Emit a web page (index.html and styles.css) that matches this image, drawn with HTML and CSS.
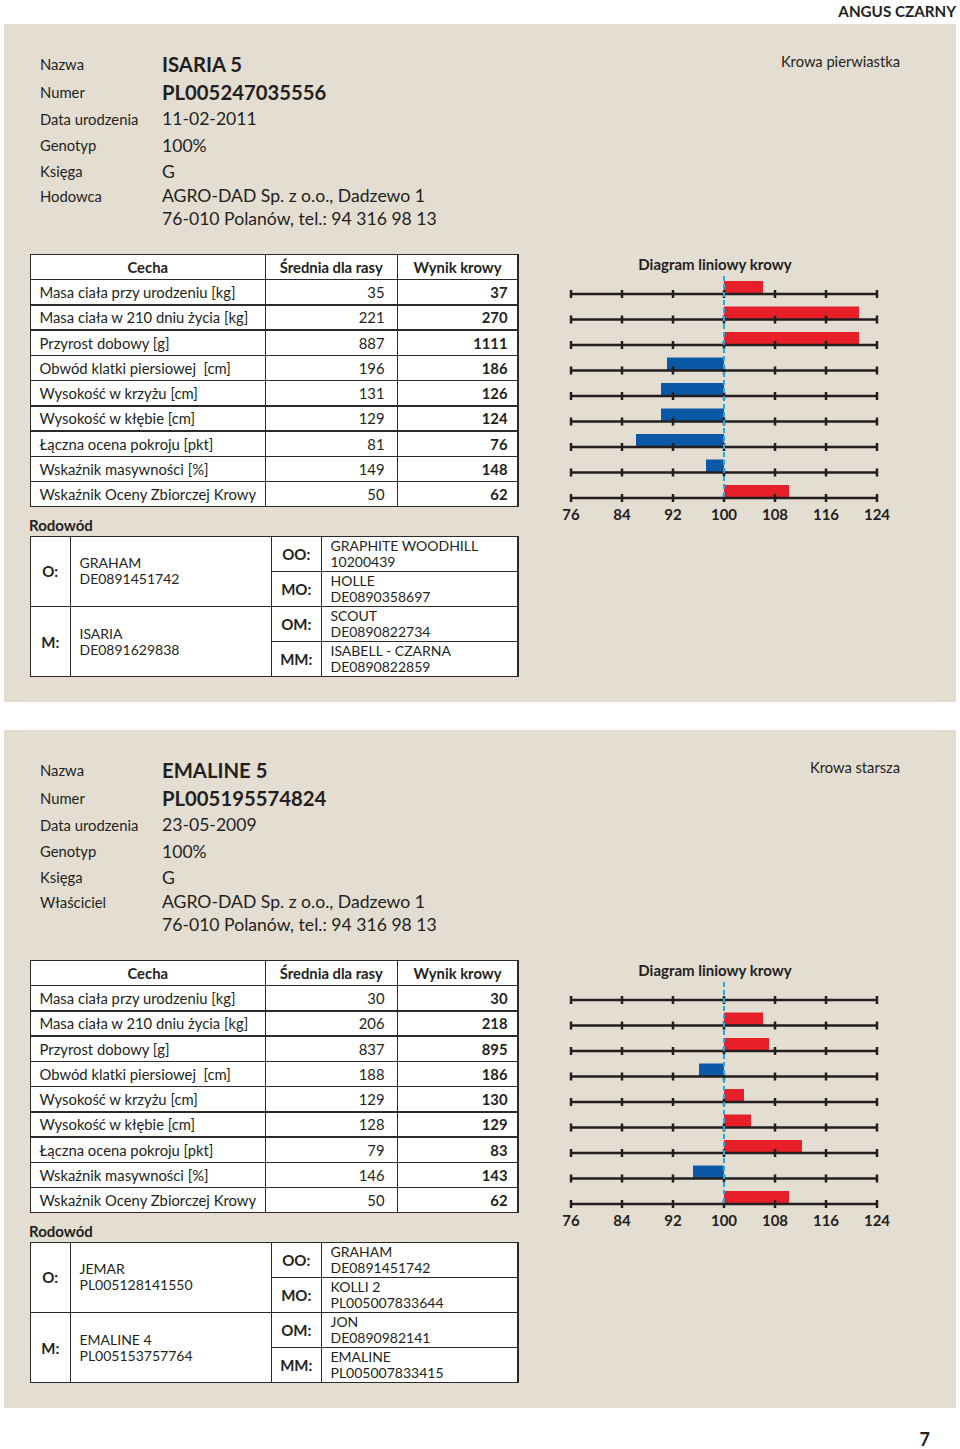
FILE: index.html
```html
<!DOCTYPE html>
<html lang="pl">
<head>
<meta charset="utf-8">
<title>Angus czarny</title>
<link rel="stylesheet" href="styles.css">
</head>
<body>
<header class="breed">ANGUS CZARNY</header>
<main class="panels">
  <section class="panel">
    <div class="top">
      <div class="info">
        <div class="lbl">Nazwa</div><div class="val big">ISARIA 5</div>
        <div class="lbl">Numer</div><div class="val big">PL005247035556</div>
        <div class="lbl">Data urodzenia</div><div class="val">11-02-2011</div>
        <div class="lbl">Genotyp</div><div class="val">100%</div>
        <div class="lbl">Księga</div><div class="val">G</div>
        <div class="lbl">Hodowca</div><div class="val">AGRO-DAD Sp. z o.o., Dadzewo 1</div>
        <div class="lbl"></div><div class="val">76-010 Polanów, tel.: 94 316 98 13</div>
      </div>
      <div class="status">Krowa pierwiastka</div>
    </div>
    <div class="main">
      <div class="left">
        <div class="traits">
          <div class="h">Cecha</div><div class="h">Średnia dla rasy</div><div class="h">Wynik krowy</div>
          <div class="name">Masa ciała przy urodzeniu [kg]</div><div class="avg">35</div><div class="cow">37</div>
          <div class="name">Masa ciała w 210 dniu życia [kg]</div><div class="avg">221</div><div class="cow">270</div>
          <div class="name">Przyrost dobowy [g]</div><div class="avg">887</div><div class="cow">1111</div>
          <div class="name">Obwód klatki piersiowej&nbsp; [cm]</div><div class="avg">196</div><div class="cow">186</div>
          <div class="name">Wysokość w krzyżu [cm]</div><div class="avg">131</div><div class="cow">126</div>
          <div class="name">Wysokość w kłębie [cm]</div><div class="avg">129</div><div class="cow">124</div>
          <div class="name">Łączna ocena pokroju [pkt]</div><div class="avg">81</div><div class="cow">76</div>
          <div class="name">Wskaźnik masywności [%]</div><div class="avg">149</div><div class="cow">148</div>
          <div class="name">Wskaźnik Oceny Zbiorczej Krowy</div><div class="avg">50</div><div class="cow">62</div>
        </div>
        <div class="rod">Rodowód</div>
        <div class="ped">
          <div class="k span2">O:</div><div class="v span2"><span>GRAHAM</span><span>DE0891451742</span></div>
          <div class="k">OO:</div><div class="v"><span>GRAPHITE WOODHILL</span><span>10200439</span></div>
          <div class="k">MO:</div><div class="v"><span>HOLLE</span><span>DE0890358697</span></div>
          <div class="k span2">M:</div><div class="v span2"><span>ISARIA</span><span>DE0891629838</span></div>
          <div class="k">OM:</div><div class="v"><span>SCOUT</span><span>DE0890822734</span></div>
          <div class="k">MM:</div><div class="v"><span>ISABELL - CZARNA</span><span>DE0890822859</span></div>
        </div>
      </div>
      <svg class="chart" width="340" height="280" viewBox="0 0 340 280">
        <text class="ct" x="155" y="16" text-anchor="middle">Diagram liniowy krowy</text>
        <g class="bars">
          <rect class="up" x="164" y="27" width="39" height="13"/>
          <rect class="up" x="164" y="52.5" width="135" height="13"/>
          <rect class="up" x="164" y="78" width="135" height="13"/>
          <rect class="down" x="107" y="103.5" width="57" height="13"/>
          <rect class="down" x="101" y="129" width="63" height="13"/>
          <rect class="down" x="101" y="154.5" width="63" height="13"/>
          <rect class="down" x="76" y="180" width="88" height="13"/>
          <rect class="down" x="146" y="205.5" width="18" height="13"/>
          <rect class="up" x="164" y="231" width="65" height="13"/>
        </g>
        <g class="axes">
          <path d="M11 40H317M11 65.5H317M11 91H317M11 116.5H317M11 142H317M11 167.5H317M11 193H317M11 218.5H317M11 244H317"/>
          <path class="ticks" d="M11 36v8M62 36v8M113 36v8M164 36v8M215 36v8M266 36v8M317 36v8M11 61.5v8M62 61.5v8M113 61.5v8M164 61.5v8M215 61.5v8M266 61.5v8M317 61.5v8M11 87v8M62 87v8M113 87v8M164 87v8M215 87v8M266 87v8M317 87v8M11 112.5v8M62 112.5v8M113 112.5v8M164 112.5v8M215 112.5v8M266 112.5v8M317 112.5v8M11 138v8M62 138v8M113 138v8M164 138v8M215 138v8M266 138v8M317 138v8M11 163.5v8M62 163.5v8M113 163.5v8M164 163.5v8M215 163.5v8M266 163.5v8M317 163.5v8M11 189v8M62 189v8M113 189v8M164 189v8M215 189v8M266 189v8M317 189v8M11 214.5v8M62 214.5v8M113 214.5v8M164 214.5v8M215 214.5v8M266 214.5v8M317 214.5v8M11 240v8M62 240v8M113 240v8M164 240v8M215 240v8M266 240v8M317 240v8"/>
        </g>
        <path class="mid" d="M164 22V246"/>
        <g class="lab" text-anchor="middle">
          <text x="11" y="266">76</text><text x="62" y="266">84</text><text x="113" y="266">92</text><text x="164" y="266">100</text><text x="215" y="266">108</text><text x="266" y="266">116</text><text x="317" y="266">124</text>
        </g>
      </svg>
    </div>
  </section>

  <section class="panel">
    <div class="top">
      <div class="info">
        <div class="lbl">Nazwa</div><div class="val big">EMALINE 5</div>
        <div class="lbl">Numer</div><div class="val big">PL005195574824</div>
        <div class="lbl">Data urodzenia</div><div class="val">23-05-2009</div>
        <div class="lbl">Genotyp</div><div class="val">100%</div>
        <div class="lbl">Księga</div><div class="val">G</div>
        <div class="lbl">Właściciel</div><div class="val">AGRO-DAD Sp. z o.o., Dadzewo 1</div>
        <div class="lbl"></div><div class="val">76-010 Polanów, tel.: 94 316 98 13</div>
      </div>
      <div class="status">Krowa starsza</div>
    </div>
    <div class="main">
      <div class="left">
        <div class="traits">
          <div class="h">Cecha</div><div class="h">Średnia dla rasy</div><div class="h">Wynik krowy</div>
          <div class="name">Masa ciała przy urodzeniu [kg]</div><div class="avg">30</div><div class="cow">30</div>
          <div class="name">Masa ciała w 210 dniu życia [kg]</div><div class="avg">206</div><div class="cow">218</div>
          <div class="name">Przyrost dobowy [g]</div><div class="avg">837</div><div class="cow">895</div>
          <div class="name">Obwód klatki piersiowej&nbsp; [cm]</div><div class="avg">188</div><div class="cow">186</div>
          <div class="name">Wysokość w krzyżu [cm]</div><div class="avg">129</div><div class="cow">130</div>
          <div class="name">Wysokość w kłębie [cm]</div><div class="avg">128</div><div class="cow">129</div>
          <div class="name">Łączna ocena pokroju [pkt]</div><div class="avg">79</div><div class="cow">83</div>
          <div class="name">Wskaźnik masywności [%]</div><div class="avg">146</div><div class="cow">143</div>
          <div class="name">Wskaźnik Oceny Zbiorczej Krowy</div><div class="avg">50</div><div class="cow">62</div>
        </div>
        <div class="rod">Rodowód</div>
        <div class="ped">
          <div class="k span2">O:</div><div class="v span2"><span>JEMAR</span><span>PL005128141550</span></div>
          <div class="k">OO:</div><div class="v"><span>GRAHAM</span><span>DE0891451742</span></div>
          <div class="k">MO:</div><div class="v"><span>KOLLI 2</span><span>PL005007833644</span></div>
          <div class="k span2">M:</div><div class="v span2"><span>EMALINE 4</span><span>PL005153757764</span></div>
          <div class="k">OM:</div><div class="v"><span>JON</span><span>DE0890982141</span></div>
          <div class="k">MM:</div><div class="v"><span>EMALINE</span><span>PL005007833415</span></div>
        </div>
      </div>
      <svg class="chart" width="340" height="280" viewBox="0 0 340 280">
        <text class="ct" x="155" y="16" text-anchor="middle">Diagram liniowy krowy</text>
        <g class="bars">
          <rect class="up" x="164" y="52.5" width="39" height="13"/>
          <rect class="up" x="164" y="78" width="45" height="13"/>
          <rect class="down" x="139" y="103.5" width="25" height="13"/>
          <rect class="up" x="164" y="129" width="20" height="13"/>
          <rect class="up" x="164" y="154.5" width="27" height="13"/>
          <rect class="up" x="164" y="180" width="78" height="13"/>
          <rect class="down" x="133" y="205.5" width="31" height="13"/>
          <rect class="up" x="164" y="231" width="65" height="13"/>
        </g>
        <g class="axes">
          <path d="M11 40H317M11 65.5H317M11 91H317M11 116.5H317M11 142H317M11 167.5H317M11 193H317M11 218.5H317M11 244H317"/>
          <path class="ticks" d="M11 36v8M62 36v8M113 36v8M164 36v8M215 36v8M266 36v8M317 36v8M11 61.5v8M62 61.5v8M113 61.5v8M164 61.5v8M215 61.5v8M266 61.5v8M317 61.5v8M11 87v8M62 87v8M113 87v8M164 87v8M215 87v8M266 87v8M317 87v8M11 112.5v8M62 112.5v8M113 112.5v8M164 112.5v8M215 112.5v8M266 112.5v8M317 112.5v8M11 138v8M62 138v8M113 138v8M164 138v8M215 138v8M266 138v8M317 138v8M11 163.5v8M62 163.5v8M113 163.5v8M164 163.5v8M215 163.5v8M266 163.5v8M317 163.5v8M11 189v8M62 189v8M113 189v8M164 189v8M215 189v8M266 189v8M317 189v8M11 214.5v8M62 214.5v8M113 214.5v8M164 214.5v8M215 214.5v8M266 214.5v8M317 214.5v8M11 240v8M62 240v8M113 240v8M164 240v8M215 240v8M266 240v8M317 240v8"/>
        </g>
        <path class="mid" d="M164 22V246"/>
        <g class="lab" text-anchor="middle">
          <text x="11" y="266">76</text><text x="62" y="266">84</text><text x="113" y="266">92</text><text x="164" y="266">100</text><text x="215" y="266">108</text><text x="266" y="266">116</text><text x="317" y="266">124</text>
        </g>
      </svg>
    </div>
  </section>
</main>
<footer class="pagenum">7</footer>
</body>
</html>
```

FILE: styles.css
```css
* { box-sizing: border-box; }
body {
  margin: 0;
  width: 960px;
  font-family: Lato, "Open Sans", "Liberation Sans", sans-serif;
  color: #231f20;
  background: #fff;
}
.breed {
  height: 24px;
  text-align: right;
  padding-right: 4px;
  font-weight: bold;
  font-size: 15.2px;
  line-height: 22px;
}
.panels {
  display: flex;
  flex-direction: column;
  gap: 28px;
}
.panel {
  margin: 0 4px;
  height: 678px;
  background: #e3ddd2;
  padding: 26px 0 0 26px;
}
.top {
  display: flex;
  justify-content: space-between;
  height: 180px;
  margin-bottom: 24px;
}
.info {
  padding-left: 10px;
  display: grid;
  grid-template-columns: 122px auto;
  grid-template-rows: 28px 27px 27px 26px 26px 23px 23px;
  align-items: center;
}
.lbl { font-size: 14.8px; }
.val { font-size: 17.6px; }
.val.big { font-size: 20.3px; font-weight: bold; }
.status {
  font-size: 14.7px;
  line-height: 22px;
  padding-right: 56px;
}
.main { display: flex; }
.left { width: 489px; }
.traits {
  display: grid;
  grid-template-columns: 233.5px 130.5px 119px;
  grid-auto-rows: 23.75px;
  gap: 1.5px;
  border: 1.5px solid #2a2a2a;
  background: #2a2a2a;
}
.traits > div {
  background: #fff;
  display: flex;
  align-items: center;
  font-size: 14.8px;
  white-space: pre;
}
.traits .h { justify-content: center; font-weight: bold; }
.traits .name { padding-left: 8.5px; }
.traits .avg { justify-content: flex-end; padding-right: 12px; }
.traits .cow { justify-content: flex-end; padding-right: 9.5px; font-weight: bold; }
.rod {
  height: 29px;
  padding-top: 9px;
  font-weight: bold;
  font-size: 15px;
  line-height: 18px;
  margin-left: -1px;
}
.ped {
  display: grid;
  grid-template-columns: 38.5px 199.5px 48.5px 195px;
  grid-template-rows: repeat(4, 33.625px);
  gap: 1.5px;
  border: 1.5px solid #2a2a2a;
  background: #2a2a2a;
}
.ped > div {
  background: #fff;
  display: flex;
}
.ped .span2 { grid-row: span 2; }
.ped .k {
  align-items: center;
  justify-content: center;
  font-weight: bold;
  font-size: 15px;
}
.ped .v {
  flex-direction: column;
  justify-content: center;
  padding-left: 8.5px;
  font-size: 14px;
  line-height: 16px;
}
.chart {
  display: block;
  margin-left: 41px;
}
.chart .ct { font-family: Lato, "Open Sans", sans-serif; font-weight: bold; font-size: 15px; fill: #231f20; }
.chart .up { fill: #e71f29; }
.chart .down { fill: #0a58a6; }
.chart .axes path { stroke: #231f20; stroke-width: 2.5; fill: none; }
.chart .mid { stroke: #27a9e1; stroke-width: 2; stroke-dasharray: 5 3; fill: none; }
.chart .lab text { font-family: Lato, "Open Sans", sans-serif; font-weight: bold; font-size: 15px; fill: #231f20; }
.pagenum {
  margin-top: 20px;
  text-align: right;
  padding-right: 30px;
  font-weight: bold;
  font-size: 18px;
  line-height: 22px;
}
```
